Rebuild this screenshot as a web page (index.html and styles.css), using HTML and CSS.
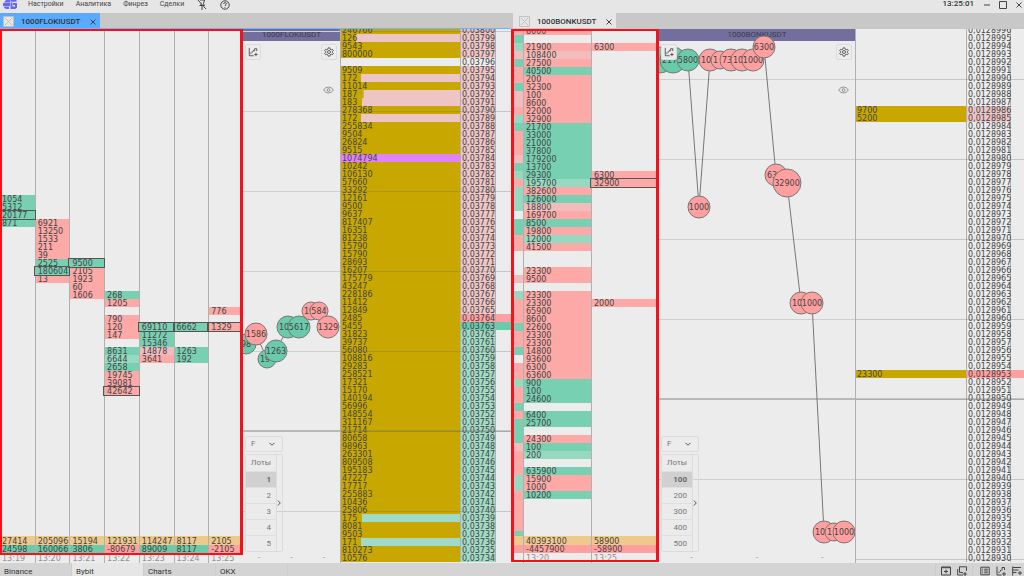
FILE: index.html
```
<!DOCTYPE html>
<html lang="ru">
<head>
  <meta charset="UTF-8">
  <meta name="viewport" content="width=device-width, initial-scale=1.0">
  <title>1000FLOKIUSDT - Bybit</title>
  <link rel="stylesheet" href="styles.css">
</head>
<body>
  <svg class="sprite" aria-hidden="true">
    <symbol id="icon-chart" viewBox="0 0 12 12">
      <path d="M1.500 1v9.500H7M3.500 8.500V6.500M5 7V5M6.500 5.500V3.500M8 5V2M8 2h2.500v3M9.500 7v4M7.500 9h4"/>
    </symbol>
    <symbol id="icon-gear" viewBox="0 0 12 12">
      <path d="M5 1h2l.4 1.600 1.200.7 1.600-.5 1 1.700L10 5.600v.8l1.200 1.100-1 1.700-1.600-.5-1.200.7L7 11H5l-.4-1.600-1.200-.7-1.600.5-1-1.700L2 6.400v-.8L.8 4.500l1-1.700 1.600.5 1.200-.7z"/>
      <circle cx="6" cy="6" r="1.800"/>
    </symbol>
    <symbol id="icon-eye" viewBox="0 0 12 8">
      <path d="M.8 4C3-.2 9-.2 11.200 4 9 8.200 3 8.200.8 4z"/>
      <circle cx="6" cy="4" r="1.500"/>
    </symbol>
    <symbol id="icon-close" viewBox="0 0 8 8">
      <path d="M1.500 1.500l5 5M6.500 1.500l-5 5"/>
    </symbol>
    <symbol id="icon-down" viewBox="0 0 8 8">
      <path d="M1.500 2.800L4 5.300l2.500-2.500"/>
    </symbol>
    <symbol id="icon-right" viewBox="0 0 8 8">
      <path d="M2.800 1.500L5.300 4 2.800 6.500"/>
    </symbol>
    <symbol id="icon-box" viewBox="0 0 12 12">
      <path d="M.5.5h11v11H.5zM2 2l8 8M10 2l-8 8"/>
    </symbol>
  </svg>

  <header class="header">
    <svg class="logo" viewBox="0 0 16 10" aria-hidden="true">
      <path d="M4 0h4v2.500H2zM1 3h7v3H1zM1.500 6.500H7V9H5Q2.500 9 1.500 6.500zM8.500 0h6v1.800h-6zM8.500 2.500h2v4h2.500V5h-2V3h4v4.500Q14 9 12 9H8.500z"/>
    </svg>
    <nav class="menu">
      <a href="#settings">Настройки</a>
      <a href="#analytics">Аналитика</a>
      <a href="#finres">Финрез</a>
      <a href="#trades">Сделки</a>
    </nav>
    <button class="icon-btn" aria-label="Закрепить">
      <svg viewBox="0 0 10 10"><path d="M1 0l8 9M3 0h4.500L6.500 3.500l1 2H3.500l.8-2M5 5.500V10M2.500 5.500h2"/></svg>
    </button>
    <button class="icon-btn help" aria-label="Помощь">
      <svg viewBox="0 0 10 10"><circle cx="5" cy="5" r="4.200"/><path d="M3.700 4c0-2 2.700-1.700 2.700-.2C6.400 4.800 5 4.800 5 6M5 7v.8"/></svg>
    </button>
    <time class="clock">13:25:01</time>
    <div class="window-buttons">
      <button class="icon-btn" aria-label="Свернуть"><svg viewBox="0 0 10 10"><path d="M2 5h6"/></svg></button>
      <button class="icon-btn" aria-label="Развернуть"><svg viewBox="0 0 10 10"><path d="M1.500 1.500h7v7h-7z"/></svg></button>
      <button class="icon-btn" aria-label="Закрыть"><svg viewBox="0 0 10 10"><path d="M2.500 2.500l5 5M7.500 2.500l-5 5"/></svg></button>
    </div>
  </header>

  <main class="workspace">
    <section class="pane floki">
      <div class="tabs">
        <div class="tab active">
          <svg class="tab-icon"><use href="#icon-box"/></svg>
          <span>1000FLOKIUSDT</span>
          <button class="tab-close" aria-label="Закрыть вкладку"><svg><use href="#icon-close"/></svg></button>
        </div>
      </div>
      <div class="pane-body">
        <div class="clusters">
          <div class="cluster-view"><table class="cluster-table" id="floki-clusters"></table></div>
          <table class="totals">
            <tbody>
              <tr class="volume-row"><td>27414</td><td>205096</td><td>15194</td><td>121931</td><td>114247</td><td>8117</td><td>2105</td></tr>
              <tr class="delta-row"><td class="up">24598</td><td class="up">160066</td><td class="up">3806</td><td class="down">-80679</td><td class="up">89009</td><td class="up">8117</td><td class="down">-2105</td></tr>
              <tr class="time-row"><td>13:19</td><td>13:20</td><td>13:21</td><td>13:22</td><td>13:23</td><td>13:24</td><td>13:25</td></tr>
            </tbody>
          </table>
          <div class="frame"></div>
        </div>
        <div class="chart">
          <svg class="ticks" id="floki-ticks"></svg>
          <h2 class="chart-title">1000FLOKIUSDT</h2>
          <div class="chart-tools">
            <button class="tool-btn" aria-label="График"><svg><use href="#icon-chart"/></svg></button>
            <button class="tool-btn" aria-label="Настройки"><svg><use href="#icon-gear"/></svg></button>
          </div>
          <button class="eye-btn" aria-label="Показать"><svg><use href="#icon-eye"/></svg></button>
          <div class="lots">
            <div class="lot-mode">
              <select aria-label="Режим лота"><option>F</option></select>
              <svg><use href="#icon-down"/></svg>
            </div>
            <div class="lot-panel">
              <div class="lot-list">
                <div class="lot-head">Лоты</div>
                <button class="selected">1</button>
                <button>2</button>
                <button>3</button>
                <button>4</button>
                <button>5</button>
              </div>
              <button class="lot-more" aria-label="Ещё"><svg><use href="#icon-right"/></svg></button>
            </div>
          </div>
          <div class="chart-axis"><span>-</span><span>-</span><span>-</span></div>
        </div>
        <div class="ladder"><table id="floki-ladder"></table></div>
      </div>
    </section>

    <section class="pane bonk">
      <div class="tabs">
        <div class="tab">
          <svg class="tab-icon"><use href="#icon-box"/></svg>
          <span>1000BONKUSDT</span>
          <button class="tab-close" aria-label="Закрыть вкладку"><svg><use href="#icon-close"/></svg></button>
        </div>
      </div>
      <div class="pane-body">
        <div class="clusters">
          <div class="cluster-view"><table class="cluster-table" id="bonk-clusters"></table></div>
          <table class="totals">
            <tbody>
              <tr class="volume-row"><td class="cut"></td><td>40393100</td><td>58900</td></tr>
              <tr class="delta-row"><td class="cut down"></td><td class="down">-4457900</td><td class="down">-58900</td></tr>
              <tr class="time-row"><td class="cut"></td><td>13:20</td><td>13:25</td></tr>
            </tbody>
          </table>
          <div class="frame"></div>
        </div>
        <div class="chart">
          <svg class="ticks" id="bonk-ticks"></svg>
          <h2 class="chart-title">1000BONKUSDT</h2>
          <div class="chart-tools">
            <button class="tool-btn" aria-label="График"><svg><use href="#icon-chart"/></svg></button>
            <button class="tool-btn" aria-label="Настройки"><svg><use href="#icon-gear"/></svg></button>
          </div>
          <button class="eye-btn" aria-label="Показать"><svg><use href="#icon-eye"/></svg></button>
          <div class="lots">
            <div class="lot-mode">
              <select aria-label="Режим лота"><option>F</option></select>
              <svg><use href="#icon-down"/></svg>
            </div>
            <div class="lot-panel">
              <div class="lot-list">
                <div class="lot-head">Лоты</div>
                <button class="selected">100</button>
                <button>200</button>
                <button>300</button>
                <button>400</button>
                <button>500</button>
              </div>
              <button class="lot-more" aria-label="Ещё"><svg><use href="#icon-right"/></svg></button>
            </div>
          </div>
          <div class="chart-axis"><span>-</span><span>-</span><span>-</span></div>
        </div>
        <div class="ladder"><table id="bonk-ladder"></table></div>
      </div>
    </section>
  </main>

  <footer class="footer">
    <nav class="sheets">
      <a href="#binance">Binance</a>
      <a href="#bybit" class="active">Bybit</a>
      <a href="#charts">Charts</a>
      <a href="#okx">OKX</a>
    </nav>
    <div class="footer-tools">
      <button class="icon-btn" aria-label="Окно"><svg viewBox="0 0 10 10"><path d="M.5 1h9v8h-9zM.5 1.700h9M5 3.500v4M3 5.500h4"/></svg></button>
      <button class="icon-btn" aria-label="Добавить окно"><svg viewBox="0 0 10 10"><path d="M2.500.8h7v4M2.500.8v5.700H6M.7 3v6H6M8 6v4M6 8h4"/></svg></button>
    </div>
    <div class="footer-tools">
      <button class="icon-btn" aria-label="Список"><svg viewBox="0 0 10 10"><path d="M.8 1.200h8.400v7.600H.8zM2.200 3.200h1M4.200 3.200h3.600M2.200 5h1M4.200 5h3.600M2.200 6.800h1M4.200 6.800h3.600"/></svg></button>
      <button class="icon-btn" aria-label="Добавить график"><svg viewBox="0 0 10 10"><path d="M1 .5V9h4.500M3 7V5.500M4.500 5.500V4M6 4.500V1.500h2.500V4M8 6v4M6 8h4"/></svg></button>
      <button class="icon-btn" aria-label="Добавить стакан"><svg viewBox="0 0 10 10"><path d="M.7.5v9M1 1.500h8M1 4h5.500M1 6.500h3.500M8 5v4M6 7h4"/></svg></button>
    </div>
  </footer>

  <script src="app.js"></script>
</body>
</html>
```
FILE: styles.css
```
* {
  box-sizing: border-box;
}

body {
  margin: 0;
  height: 100vh;
  display: flex;
  flex-direction: column;
  overflow: hidden;
  background: #ececec;
  color: #444;
  font-family: Roboto, Arial, sans-serif;
  font-size: 8px;
  line-height: 8px;
}

button {
  margin: 0;
  padding: 0;
  border: none;
  background: none;
  color: inherit;
  font: inherit;
  cursor: pointer;
}

a {
  color: inherit;
  text-decoration: none;
}

svg {
  display: block;
  fill: none;
  stroke: #444;
  stroke-width: 1;
}

table {
  width: 100%;
  table-layout: fixed;
  border-spacing: 0;
  font-family: "DejaVu Sans", Verdana, sans-serif;
}

td {
  height: 8px;
  padding: 1px 0 0 2px;
  line-height: 7px;
  white-space: nowrap;
}

.sprite {
  display: none;
}

/* top bar */
.header {
  flex: none;
  height: 13px;
  display: flex;
  align-items: flex-start;
  padding: 0 0 0 2px;
  background: #e6e6e6;
}

.logo {
  width: 16px;
  height: 10px;
  fill: #6666f5;
  stroke: none;
}

.menu {
  display: flex;
  gap: 12px;
  margin-left: 10px;
  font-size: 7px;
}

.icon-btn svg {
  width: 10px;
  height: 10px;
}

.header .icon-btn {
  height: 9px;
  margin-left: 13px;
}

.clock {
  margin-left: auto;
  font-weight: 500;
  color: #333;
}

.header .window-buttons {
  display: flex;
  gap: 6px;
  padding-left: 8px;
}

.header .window-buttons .icon-btn {
  margin-left: 0;
}

/* panes */
.workspace {
  flex: 1;
  min-height: 0;
  display: grid;
  grid-template-columns: 511fr 513fr;
}

.pane {
  min-width: 0;
  min-height: 0;
  display: flex;
  flex-direction: column;
}

.tabs {
  flex: none;
  height: 16px;
  display: flex;
  background: #c8c8c8;
  border-bottom: 1px solid #c8c8c8;
}

.floki .tabs {
  border-bottom-color: #74b3f5;
}

.bonk .tabs {
  padding-left: 2px;
}

.tab {
  display: flex;
  align-items: center;
  gap: 7px;
  padding: 2px 3px 0 3px;
  background: #e6e6e6;
  color: #333;
  font-weight: 500;
}

.bonk .tab {
  padding-left: 6px;
}

.tab.active {
  background: #58abff;
}

.tab-icon {
  width: 11px;
  height: 11px;
  fill: #e6e6e6;
  stroke: #bdbdbd;
}

.tab-close {
  margin-left: 2px;
}

.tab-close svg {
  width: 8px;
  height: 8px;
}

.pane-body {
  flex: 1;
  min-height: 0;
  display: grid;
  grid-template-rows: minmax(0, 1fr);
}

.floki .pane-body {
  grid-template-columns: 243fr 97fr 171fr;
  --line: 82px;
  --major: 401px;
}

.bonk .pane-body {
  grid-template-columns: 148fr 196fr 169fr;
  --line: 50px;
  --major: 369px;
}

/* clusters */
.clusters {
  position: relative;
  min-width: 0;
  display: flex;
  flex-direction: column;
}

.cluster-view {
  flex: 1;
  min-height: 0;
  overflow: hidden;
}

.cluster-table {
  margin-top: -2px;
}

.clusters td + td {
  border-left: 1px solid #b0b0b0;
}

.clusters .cut {
  width: 12px;
}

.buy {
  background: #78d0b2;
}

.buy-weak {
  background: #96d9c0;
}

.sell {
  background: #fca9a7;
}

.sell-weak {
  background: #f3bcbc;
}

.peak {
  outline: 1px solid #555;
}

.volume-row td {
  background: #efc88c;
  height: 9px;
}

.up {
  background: #69cbab;
}

.down {
  background: #ff9f9f;
}

.time-row td {
  height: 10px;
  color: #909090;
}

.frame {
  position: absolute;
  inset: 0 0 8px;
  border: 3px solid #f5101a;
  border-top-width: 2px;
  border-bottom-width: 2px;
}

.bonk .frame {
  bottom: 1px;
}

.floki .frame {
  border-left-width: 2px;
}

/* tick chart */
.chart {
  position: relative;
  min-width: 0;
  display: flex;
  flex-direction: column;
  background:
    linear-gradient(#b8b8b8, #b8b8b8) 0 var(--major) / 100% 2px no-repeat,
    linear-gradient(#cfcfcf 1px, transparent 1px) 0 var(--line) / 100% 80px;
}

.ticks {
  position: absolute;
  top: 0;
  left: 0;
  width: 100%;
  height: 100%;
  stroke: #777;
}

.ticks text {
  fill: #444;
  stroke: none;
  font-family: "DejaVu Sans", Verdana, sans-serif;
  font-size: 8px;
  text-anchor: middle;
}

.ticks .covered {
  text-anchor: start;
}

.tick-buy {
  fill: #69cbab;
}

.tick-sell {
  fill: #ff9f9f;
}

.chart-title {
  position: relative;
  z-index: -1;
  margin: 0;
  background: #726f9f;
  color: #3b3a4d;
  font-size: 8px;
  font-weight: 400;
  line-height: 12px;
  text-align: center;
}

.chart-tools {
  position: relative;
  display: flex;
  justify-content: space-between;
  padding: 3px 3px 2px 2px;
}

.tool-btn {
  width: 16px;
  height: 16px;
  padding: 2px;
  border: 1px solid #dcdcdc;
  border-radius: 2px;
  background: #ececec;
}

.tool-btn svg {
  width: 10px;
  height: 10px;
}

.eye-btn {
  align-self: flex-end;
  margin: 24px 6px 0 0;
}

.eye-btn svg {
  width: 11px;
  height: 8px;
  stroke: #888;
}

.lots {
  position: relative;
  width: 38px;
  margin: auto 0 2px 2px;
  color: #777;
}

.lot-mode {
  display: flex;
  align-items: center;
  height: 16px;
  margin-bottom: 2px;
  padding: 0 6px 0 5px;
  border: 1px solid #dcdcdc;
  border-radius: 2px;
}

.lot-mode select {
  flex: 1;
  min-width: 0;
  padding: 0;
  border: none;
  background: none;
  appearance: none;
  color: inherit;
  font: inherit;
}

.lot-mode svg,
.lot-more svg {
  width: 8px;
  height: 8px;
  stroke: #555;
}

.lot-panel {
  display: flex;
  border: 1px solid #dcdcdc;
  border-radius: 2px;
}

.lot-list {
  flex: 1;
  display: flex;
  flex-direction: column;
  border-right: 1px solid #dcdcdc;
  background: #ebebeb;
}

.lot-head,
.lot-list button {
  height: 16px;
  padding-right: 5px;
  line-height: 16px;
  text-align: right;
}

.lot-list button {
  border-top: 1px solid #dfdfdf;
}

.lot-list .selected {
  background: #d0d0d0;
  color: #666;
  font-weight: 700;
}

.lot-more {
  width: 5px;
}

.lot-more svg {
  margin-left: -2px;
}

.chart-axis {
  position: relative;
  display: flex;
  height: 9px;
  background: #ececec;
  color: #888;
}

.chart-axis span {
  flex: 1;
  text-align: center;
}

/* order book */
.ladder {
  position: relative;
  min-width: 0;
  overflow: hidden;
  border-left: 1px solid #b0b0b0;
}

.ladder::after {
  content: "";
  position: absolute;
  inset: 0;
  pointer-events: none;
  background:
    linear-gradient(rgba(110, 110, 110, 0.3), rgba(110, 110, 110, 0.3)) 0 var(--major) / 100% 2px no-repeat,
    linear-gradient(rgba(110, 110, 110, 0.3) 1px, transparent 1px) 0 var(--line) / 100% 80px;
}

.ladder table {
  margin-top: -3px;
}

.ladder .volume {
  padding-left: 1px;
}

.ladder .price {
  width: 36px;
  padding-left: 1px;
  border: solid #b0b0b0;
  border-width: 0 1px;
}

.ladder .tail {
  width: 15px;
  padding: 0;
}

.bonk .ladder .price {
  width: 45px;
}

.bonk .ladder .tail {
  width: 13px;
}

.filled {
  background: linear-gradient(#c8a800, #c8a800) no-repeat;
}

.ask {
  background-color: #eec5c5;
}

.bid {
  background-color: #a1dbc6;
}

.best-ask {
  background-color: #ff9f9f;
}

.best-bid {
  background-color: #69cbab;
}

.huge {
  background-color: #e083f6;
}

/* bottom bar */
.footer {
  flex: none;
  height: 13px;
  display: flex;
  background: #d4d4d4;
  color: #333;
}

.sheets {
  flex: 1;
  display: flex;
}

.sheets a {
  width: 72px;
  padding: 5px 0 0 4px;
  border-right: 1px solid #cecece;
}

.sheets .active {
  background: #e6e6e6;
}

.footer-tools {
  display: flex;
  align-items: center;
  gap: 6px;
  padding: 3px 5px 0;
  border-left: 1px solid #cccccc;
}

.footer-tools + .footer-tools {
  padding: 3px 2px 0 7px;
}
```
FILE: app.js
```
const ROWS = 67;

// one letter per cell: g/G buy, weak buy; r/R sell, weak sell
const TONES = { g: 'buy', G: 'buy-weak', r: 'sell', R: 'sell-weak' };

// every column: first row, then "tone+value" per row; "-" is an empty row, "*" marks the peak
const flokiClusters = [
  [21, 'g1054 g5312 g20177* g871'],
  [24, 'r6921 r13250 r1533 r211 r39 g2525 g180604* r13'],
  [29, 'g9500* r2105 r1923 r60 r1606'],
  [33, 'g268 r1205 - r790 r120 r147 - g8631 G6644 g2658 r19745 r39081 r42642*'],
  [37, 'g69110* g11272 g15346 R14878 r3641'],
  [37, 'g6662* - - g1263 g192'],
  [35, 'r776 - r1329*']
];

const bonkClusters = [
  [0, 'r g G R g r r g R R r G g r r r R g G r G G G - g g r r - - - R - G r r r g r r g - r r G r r g r g g g R r r r G G r r r r r g'],
  [0, 'r8600 - r21900 R108400 r27500 g40500 r200 r32300 r100 r8600 r22000 r32900 g21700 g33000 g21000 g37800 g179200 g13700 g29300 G195700 r382600 g126000 R18800 r169700 g8500 r19800 G12000 r41500 - - r23300 r9500 - r23300 r23300 r65900 r8600 r22600 r23300 r23300 r14800 r93600 r6300 r63600 g900 g100 g24600 - g6400 g25700 - r24300 g100 G200 - g635900 r15900 r1000 g10200'],
  [2, 'r6300 - - - - - - - - - - - - - - - r6300 r32900* - - - - - - - - - - - - - - r2000']
];

const flokiVolumes = [
  246766, 126, 9543, 800000, '', 9509, 172, 11014, 187, 183,
  278368, 172, 255834, 9504, 26824, 9515, 1074794, 10242, 106130, 57660,
  33292, 12161, 9500, 9637, 817407, 16351, 81238, 15790, 15790, 28693,
  16207, 175779, 43247, 228186, 11412, 12849, 2485, 5455, 31823, 39737,
  56080, 108816, 29283, 258521, 17321, 15170, 140194, 56996, 148554, 311167,
  21714, 80658, 98963, 263301, 809508, 195183, 47227, 17717, 255883, 10436,
  25806, 175, 8081, 9503, 171, 810273, 10576
];

const bonkVolumes = [];
bonkVolumes[10] = 9700;
bonkVolumes[11] = 5200;
bonkVolumes[43] = 23300;

function addCell(tr, text, className) {
  const td = tr.insertCell();
  td.textContent = text;
  td.className = className;
  return td;
}

function drawClusters(id, columns, cutFirst) {
  const table = document.getElementById(id);
  const parsed = columns.map(([start, cells]) => ({ start, cells: cells.split(' ') }));
  for (let row = 0; row < 64; row++) {
    const tr = table.insertRow();
    parsed.forEach((column, i) => {
      const cell = column.cells[row - column.start] || '-';
      const classes = [TONES[cell[0]] || ''];
      if (cell.endsWith('*')) classes.push('peak');
      if (cutFirst && i === 0) classes.push('cut');
      addCell(tr, cell.slice(1).replace('*', ''), classes.join(' '));
    });
  }
}

function drawLadder(id, book) {
  const table = document.getElementById(id);
  for (let row = 0; row < ROWS; row++) {
    const tr = table.insertRow();
    const side = book.side(row);
    const volume = book.volumes[row] || '';
    const classes = ['volume'];
    if (volume > 1000000) {
      classes.push('huge');
    } else if (volume) {
      classes.push('filled');
    }
    if (volume && volume < 1000) classes.push(side);
    const td = addCell(tr, volume, classes.join(' '));
    if (volume && volume < 1000) {
      td.style.backgroundSize = Math.round(volume / 10) + '% 100%';
    }
    const price = ((book.top - row) / 10 ** book.digits).toFixed(book.digits).replace('.', ',');
    addCell(tr, price, 'price ' + side);
    addCell(tr, '', 'tail ' + (side.startsWith('best') ? side : ''));
  }
}

// points: x, y, radius, side, label, covered by the next tick
function drawTicks(id, points) {
  const svg = document.getElementById(id);
  const path = points.map(p => p[0] + ',' + p[1]).join(' ');
  let html = '<polyline points="' + path + '"/>';
  points.forEach(([x, y, r, side, label, covered]) => {
    if (!r) return;
    html += '<circle class="tick-' + side + '" cx="' + x + '" cy="' + y + '" r="' + r + '"/>';
    if (covered) {
      html += '<text class="covered" x="' + (x - r + 2) + '" y="' + (y + 3) + '">' + label + '</text>';
    } else {
      html += '<text x="' + x + '" y="' + (y + 3) + '">' + label + '</text>';
    }
  });
  svg.innerHTML = html;
}

drawClusters('floki-clusters', flokiClusters, false);
drawClusters('bonk-clusters', bonkClusters, true);

drawLadder('floki-ladder', {
  top: 3800,
  digits: 5,
  volumes: flokiVolumes,
  side: row => {
    if (row === 4) return '';
    if (row === 36) return 'best-ask';
    if (row === 37) return 'best-bid';
    return row < 36 ? 'ask' : 'bid';
  }
});

drawLadder('bonk-ladder', {
  top: 128996,
  digits: 7,
  volumes: bonkVolumes,
  side: row => {
    if (row === 43) return 'best-ask';
    return row === 10 || row === 11 ? 'ask' : '';
  }
});

drawTicks('floki-ticks', [
  [-2, 330, 0],
  [3, 315, 10, 'buy', '98'],
  [13, 305, 11, 'sell', '1586'],
  [24, 330, 9, 'buy', '19', true],
  [33, 322, 11, 'buy', '1263'],
  [45, 298, 11, 'buy', '10', true],
  [56, 298, 11, 'buy', '5617'],
  [68, 282, 9, 'sell', '19', true],
  [76, 282, 9, 'sell', '584'],
  [85, 298, 11, 'sell', '1329']
]);

drawTicks('bonk-ticks', [
  [1, 31, 13, 'buy', ''],
  [14, 31, 13, 'buy', '217', true],
  [29, 31, 11, 'buy', '5800'],
  [40, 178, 11, 'sell', '1000'],
  [51, 31, 11, 'sell', '10', true],
  [61, 31, 9, 'sell', '1', true],
  [72, 31, 11, 'sell', '73', true],
  [83, 31, 11, 'sell', '10', true],
  [94, 31, 11, 'sell', '1000'],
  [105, 18, 11, 'sell', '6300'],
  [117, 146, 11, 'sell', '63', true],
  [128, 154, 14, 'sell', '32900'],
  [142, 274, 11, 'sell', '10', true],
  [153, 274, 11, 'sell', '1000'],
  [165, 503, 11, 'sell', '10', true],
  [175, 503, 9, 'sell', '1', true],
  [185, 503, 11, 'sell', '1000']
]);
```
